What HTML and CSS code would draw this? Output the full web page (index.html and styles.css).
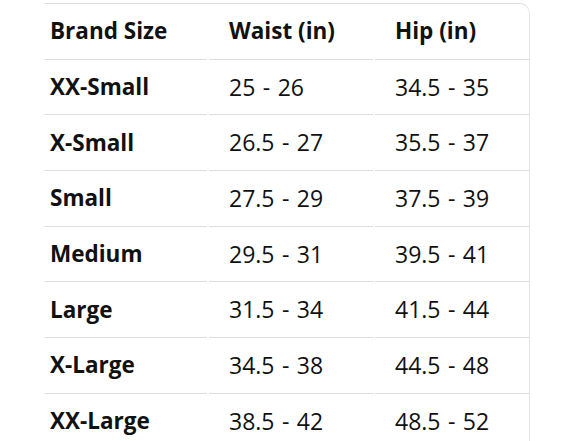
FILE: index.html
```html
<!DOCTYPE html>
<html>
<head>
<meta charset="utf-8">
<link rel="stylesheet" href="styles.css">
</head>
<body>
<div class="chart">
  <div class="grid">
    <div class="cell first head">Brand Size</div><div class="cell head">Waist (in)</div><div class="cell head">Hip (in)</div>
    <div class="cell first head">XX-Small</div><div class="cell">25 - 26</div><div class="cell">34.5 - 35</div>
    <div class="cell first head">X-Small</div><div class="cell">26.5 - 27</div><div class="cell">35.5 - 37</div>
    <div class="cell first head">Small</div><div class="cell">27.5 - 29</div><div class="cell">37.5 - 39</div>
    <div class="cell first head">Medium</div><div class="cell">29.5 - 31</div><div class="cell">39.5 - 41</div>
    <div class="cell first head">Large</div><div class="cell">31.5 - 34</div><div class="cell">41.5 - 44</div>
    <div class="cell first head">X-Large</div><div class="cell">34.5 - 38</div><div class="cell">44.5 - 48</div>
    <div class="cell first head">XX-Large</div><div class="cell">38.5 - 42</div><div class="cell">48.5 - 52</div>
  </div>
</div>
</body>
</html>
```
FILE: styles.css
```css
html, body {
  margin: 0;
  padding: 0;
  background: #ffffff;
  overflow: hidden;
}
body {
  font-family: "Open Sans", "Noto Sans", sans-serif;
  color: #111111;
}
.chart {
  margin: 3px 0 0 45px;
  width: 484px;
  height: 437px;
  overflow: hidden;
  border-top: 1px solid #dcdede;
  border-right: 1px solid #e4e6e6;
  border-top-right-radius: 10px;
}
.grid {
  display: grid;
  grid-template-columns: 162px 164px 154px;
  column-gap: 2px;
  grid-auto-rows: 55.7px;
}
.cell {
  display: flex;
  align-items: center;
  padding-left: 20px;
  padding-bottom: 1px;
  font-size: 23px;
  font-weight: 400;
  word-spacing: 1.5px;
  border-bottom: 1px solid #dcdede;
  white-space: nowrap;
}
.cell.first {
  padding-left: 5px;
}
.head {
  font-size: 22.5px;
  font-weight: 700;
  word-spacing: 0;
}
```
